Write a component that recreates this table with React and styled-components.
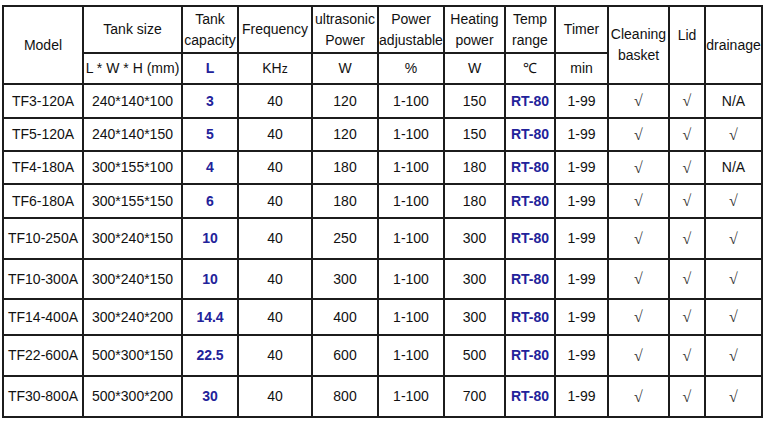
import styled, { createGlobalStyle } from "styled-components";

const GlobalStyle = createGlobalStyle`
  html, body {
    margin: 0;
    padding: 0;
    background: #ffffff;
  }
`;

const Page = styled.div`
  width: 766px;
  height: 422px;
  padding: 5px 0 0 2px;
  box-sizing: border-box;
  background: #ffffff;
  overflow: hidden;
`;

const Table = styled.table`
  border-collapse: collapse;
  table-layout: fixed;
  width: 759px;
  font-family: "Liberation Sans", Arial, sans-serif;
  font-size: 14px;
  line-height: 21px;
  color: #111;
`;

const HeadRow = styled.tr`
  height: ${(p) => p.$h}px;
`;

const Row = styled.tr`
  height: ${(p) => p.$h}px;
`;

const Th = styled.th`
  border: 2px solid #1c1c1c;
  padding: 0;
  font-weight: normal;
  text-align: center;
  vertical-align: ${(p) => (p.$top ? "top" : "middle")};
  padding-top: ${(p) => (p.$top ? "18px" : "0")};
  white-space: nowrap;
`;

const Td = styled.td`
  border: 2px solid #1c1c1c;
  padding: 0;
  text-align: center;
  vertical-align: middle;
  white-space: nowrap;
  color: ${(p) => (p.$blue ? "#22229a" : "#111")};
  font-weight: ${(p) => (p.$blue ? "bold" : "normal")};
`;

const Check = styled.span`
  font-family: "Liberation Serif", "DejaVu Serif", serif;
  font-size: 16px;
  color: #333;
`;

const Small = styled.span`
  font-size: 12px;
`;

const widths = [80, 99, 56, 74, 66, 66, 61, 50, 53, 61, 36, 57];

const rows = [
  ["TF3-120A", "240*140*100", "3", "120", "150", false, 34],
  ["TF5-120A", "240*140*150", "5", "120", "150", true, 33],
  ["TF4-180A", "300*155*100", "4", "180", "180", false, 33],
  ["TF6-180A", "300*155*150", "6", "180", "180", true, 34],
  ["TF10-250A", "300*240*150", "10", "250", "300", true, 41],
  ["TF10-300A", "300*240*150", "10", "300", "300", true, 40],
  ["TF14-400A", "300*240*200", "14.4", "400", "300", true, 36],
  ["TF22-600A", "500*300*150", "22.5", "600", "500", true, 41],
  ["TF30-800A", "500*300*200", "30", "800", "700", true, 41],
];

const tick = <Check>√</Check>;

export default function App() {
  return (
    <Page>
      <GlobalStyle />
      <Table>
        <colgroup>
          {widths.map((w, i) => (
            <col key={i} style={{ width: w }} />
          ))}
        </colgroup>
        <thead>
          <HeadRow $h={47}>
            <Th rowSpan={2}>Model</Th>
            <Th>Tank size</Th>
            <Th>Tank<br />capacity</Th>
            <Th>Frequency</Th>
            <Th>ultrasonic<br />Power</Th>
            <Th>Power<br />adjustable</Th>
            <Th>Heating<br />power</Th>
            <Th>Temp<br />range</Th>
            <Th>Timer</Th>
            <Th rowSpan={2}>Cleaning<br />basket</Th>
            <Th rowSpan={2} $top>Lid</Th>
            <Th rowSpan={2}>drainage</Th>
          </HeadRow>
          <HeadRow $h={31}>
            <Th>L * W * H (mm)</Th>
            <Td $blue>L</Td>
            <Th>KH<Small>z</Small></Th>
            <Th>W</Th>
            <Th>%</Th>
            <Th>W</Th>
            <Th>℃</Th>
            <Th>min</Th>
          </HeadRow>
        </thead>
        <tbody>
          {rows.map(([model, size, cap, power, heat, drain, h]) => (
            <Row key={model} $h={h}>
              <Td>{model}</Td>
              <Td>{size}</Td>
              <Td $blue>{cap}</Td>
              <Td>40</Td>
              <Td>{power}</Td>
              <Td>1-100</Td>
              <Td>{heat}</Td>
              <Td $blue>RT-80</Td>
              <Td>1-99</Td>
              <Td>{tick}</Td>
              <Td>{tick}</Td>
              <Td>{drain ? tick : "N/A"}</Td>
            </Row>
          ))}
        </tbody>
      </Table>
    </Page>
  );
}
